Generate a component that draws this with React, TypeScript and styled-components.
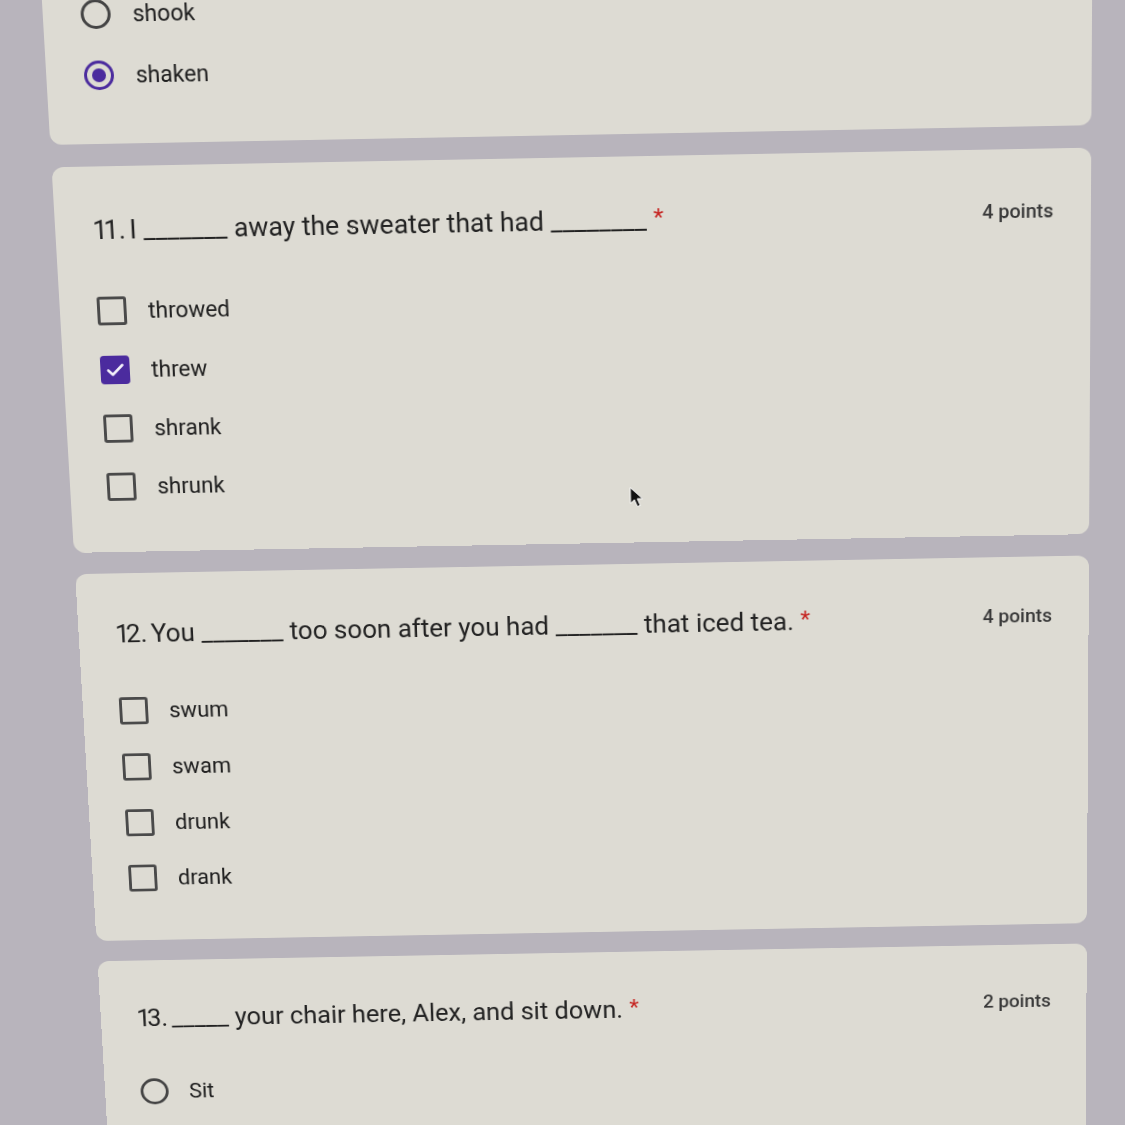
import React from "react";
import styled, { createGlobalStyle } from "styled-components";

const GlobalStyle = createGlobalStyle`
  html, body {
    margin: 0;
    padding: 0;
    height: 100%;
    overflow: hidden;
    background: #b8b4bc;
  }
  body {
    font-family: Roboto, "Noto Sans", "Liberation Sans", Arial, sans-serif;
    color: #222;
  }
`;

const Screen = styled.div`
  position: relative;
  width: 1125px;
  box-sizing: border-box;
  margin-top: -28px;
  padding: 0 33px 0 42px;
  display: flex;
  flex-direction: column;
  gap: 23px;
  transform-origin: 680px 28px;
  transform: perspective(2000px) rotateX(-6.9deg) rotate(-1.1deg);
`;

const Card = styled.section<{ $continued?: boolean }>`
  background: #dddbd3;
  border-radius: 12px;
  padding: ${(p) => (p.$continued ? "0" : "44px")} 38px 39px;
  display: flex;
  flex-direction: column;
`;

const TitleRow = styled.div`
  display: flex;
  align-items: center;
  justify-content: space-between;
  height: 40px;
  margin-bottom: 35px;
`;

const Question = styled.div`
  font-size: 27px;
  line-height: 40px;
  color: #222;
  white-space: pre;
`;

const Number = styled.span`
  margin-right: -3px;
`;

const LeadDigit = styled.span`
  letter-spacing: -4px;
`;

const Required = styled.span`
  color: #c5221f;
  font-size: 24px;
  vertical-align: 4px;
`;

const Points = styled.div`
  font-size: 20px;
  font-weight: 500;
  color: #3a3a3a;
  white-space: nowrap;
`;

const OptionList = styled.div`
  display: flex;
  flex-direction: column;
`;

const OptionRow = styled.label`
  display: flex;
  align-items: center;
  gap: 22px;
  height: 62px;
`;

const OptionText = styled.span`
  font-size: 23px;
  color: #202020;
`;

const Box = styled.span<{ $checked?: boolean }>`
  width: 30px;
  height: 30px;
  box-sizing: border-box;
  flex: none;
  border-radius: ${(p) => (p.$checked ? "4px" : "3px")};
  border: 3px solid ${(p) => (p.$checked ? "#4b2b9e" : "#4a4a4a")};
  background: ${(p) => (p.$checked ? "#4b2b9e" : "transparent")};
  display: grid;
  place-items: center;
`;

const Ring = styled.span<{ $checked?: boolean }>`
  width: 30px;
  height: 30px;
  box-sizing: border-box;
  flex: none;
  border-radius: 50%;
  border: 3px solid ${(p) => (p.$checked ? "#4b2b9e" : "#444")};
  display: grid;
  place-items: center;
`;

const Dot = styled.span`
  width: 14px;
  height: 14px;
  border-radius: 50%;
  background: #4b2b9e;
`;

const Pointer = styled.svg`
  position: absolute;
  left: 618px;
  top: 532px;
  width: 14px;
  height: 23px;
`;

type Kind = "check" | "radio";

const Option = ({ kind, label, checked }: { kind: Kind; label: string; checked?: boolean }) => (
  <OptionRow>
    {kind === "check" ? (
      <Box $checked={checked}>
        {checked && (
          <svg width="24" height="24" viewBox="0 0 24 24">
            <path
              d="M5 12.5l4.5 4.5L19.5 7"
              fill="none"
              stroke="#f4f2fb"
              strokeWidth="2.6"
              strokeLinecap="round"
              strokeLinejoin="round"
            />
          </svg>
        )}
      </Box>
    ) : (
      <Ring $checked={checked}>{checked && <Dot />}</Ring>
    )}
    <OptionText>{label}</OptionText>
  </OptionRow>
);

const Title = ({ num, text, points }: { num: string; text: string; points: string }) => (
  <TitleRow>
    <Question>
      <Number>
        <LeadDigit>{num.slice(0, 1)}</LeadDigit>
        {num.slice(1)}
      </Number>{" "}
      {text} <Required>*</Required>
    </Question>
    <Points>{points}</Points>
  </TitleRow>
);

export default function App() {
  return (
    <>
      <GlobalStyle />
      <Screen>
        <Card $continued>
          <OptionList>
            <Option kind="radio" label="shook" />
            <Option kind="radio" label="shaken" checked />
          </OptionList>
        </Card>

        <Card>
          <Title num="11." text="I _______ away the sweater that had ________" points="4 points" />
          <OptionList>
            <Option kind="check" label="throwed" />
            <Option kind="check" label="threw" checked />
            <Option kind="check" label="shrank" />
            <Option kind="check" label="shrunk" />
          </OptionList>
        </Card>

        <Card>
          <Title num="12." text="You _______ too soon after you had _______ that iced tea." points="4 points" />
          <OptionList>
            <Option kind="check" label="swum" />
            <Option kind="check" label="swam" />
            <Option kind="check" label="drunk" />
            <Option kind="check" label="drank" />
          </OptionList>
        </Card>

        <Card>
          <Title num="13." text="_____ your chair here, Alex, and sit down." points="2 points" />
          <OptionList>
            <Option kind="radio" label="Sit" />
          </OptionList>
        </Card>

        <Pointer viewBox="0 0 14 23">
          <path
            d="M1 1 L1 18 L5 14 L8 21.5 L11 20.3 L8 13 L13.5 13 Z"
            fill="#111"
            stroke="#fff"
            strokeWidth="1"
            strokeLinejoin="round"
          />
        </Pointer>
      </Screen>
    </>
  );
}
